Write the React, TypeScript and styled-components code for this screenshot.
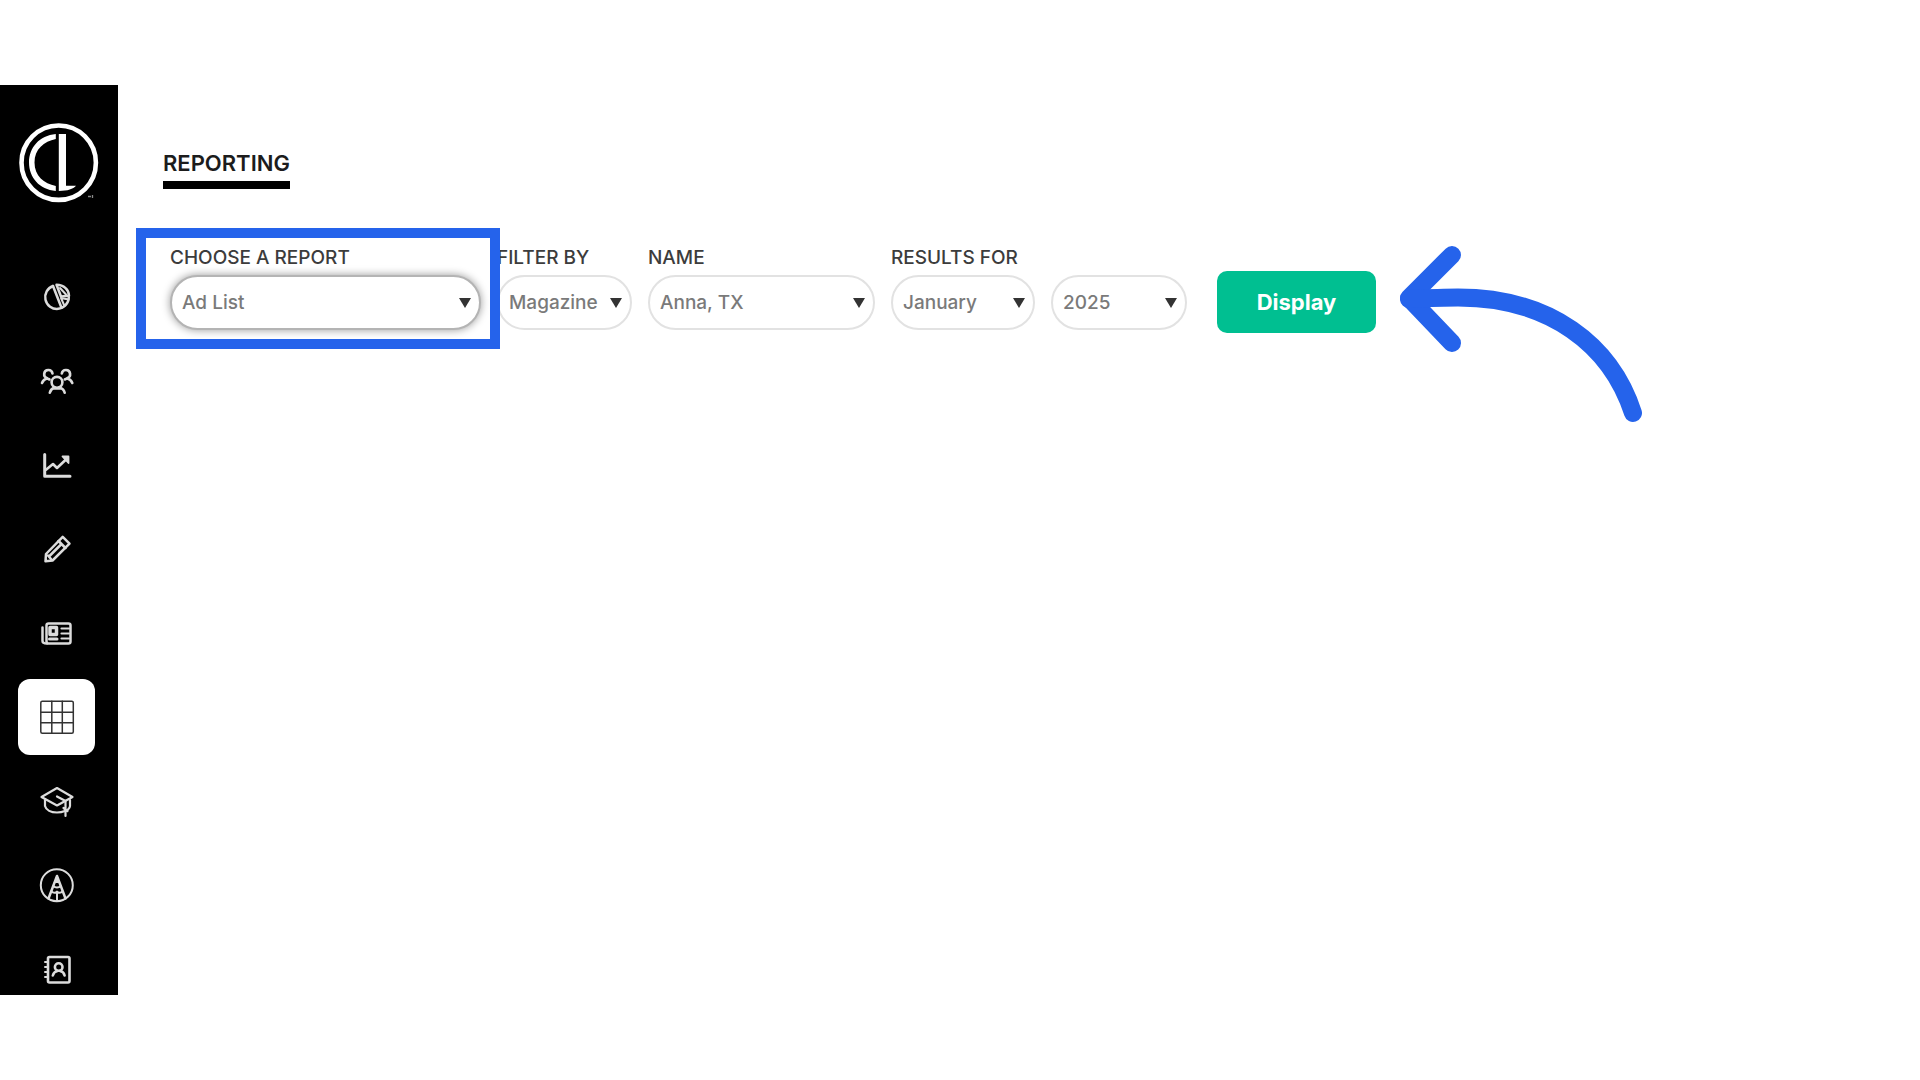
import React from "react";
import styled, { createGlobalStyle } from "styled-components";

const GlobalStyle = createGlobalStyle`
  *, *::before, *::after { box-sizing: border-box; }
  body {
    margin: 0;
    background: #fff;
    font-family: Inter, "Liberation Sans", sans-serif;
  }
`;

const accent = "#2563eb";

const Page = styled.div`
  display: flex;
  height: 100vh;
  padding: 85px 0;
  overflow: hidden;
`;

const Sidebar = styled.aside`
  flex: none;
  display: flex;
  flex-direction: column;
  width: 118px;
  padding: 37px 18px 0;
  overflow: hidden;
  background: #000;
`;

const HomeLink = styled.a`
  display: block;
  flex: none;
  height: 82px;
  margin-bottom: 55px;
`;

const Nav = styled.nav`
  display: flex;
  flex-direction: column;
  gap: 8px;
`;

const NavLink = styled.a<{ $active?: boolean }>`
  flex: none;
  display: grid;
  place-items: center;
  width: 77px;
  height: 76px;
  border-radius: 12px;
  color: ${(p) => (p.$active ? "#333" : "#dcdcdc")};
  background: ${(p) => (p.$active ? "#fff" : "transparent")};
`;

const Main = styled.main`
  flex: 1;
  min-width: 0;
  padding: 64px 45px 0;
`;

const Title = styled.h1`
  width: fit-content;
  margin: 0 0 58px;
  border-bottom: 8px solid #000;
  padding-bottom: 3px;
  font-size: 22px;
  line-height: 29px;
  font-weight: 600;
  color: #1c1c1c;
`;

const Filters = styled.form`
  display: flex;
  align-items: flex-end;
  gap: 16px;
  padding-left: 7px;
`;

const Field = styled.div<{ $width: number }>`
  position: relative;
  flex: none;
  display: flex;
  flex-direction: column;
  width: ${(p) => p.$width}px;
`;

const Highlight = styled.span`
  position: absolute;
  inset: -19px -19px -19px -34px;
  z-index: 2;
  border: 10px solid ${accent};
  pointer-events: none;
`;

const Label = styled.label`
  height: 28px;
  font-size: 19px;
  line-height: 22px;
  font-weight: 500;
  white-space: nowrap;
  color: #3c3c3c;
`;

const SelectBox = styled.div`
  position: relative;
  &::after {
    content: "";
    position: absolute;
    right: 10px;
    top: 23px;
    border: solid transparent;
    border-width: 10px 6px 0;
    border-top-color: #333;
    pointer-events: none;
  }
`;

const Select = styled.select<{ $focused?: boolean }>`
  display: block;
  appearance: none;
  width: 100%;
  height: 55px;
  padding: 0 24px 0 10px;
  border: 2px solid ${(p) => (p.$focused ? "#b4b4b4" : "#e2e2e2")};
  border-radius: 28px;
  background: #fff;
  box-shadow: ${(p) => (p.$focused ? "0 0 8px rgba(0, 0, 0, 0.4)" : "none")};
  font: 500 19px Inter, "Liberation Sans", sans-serif;
  color: #7a7a7a;
  outline: none;
`;

const Action = styled.div`
  position: relative;
  margin: 0 0 -3px 14px;
`;

const DisplayButton = styled.button`
  display: block;
  width: 159px;
  height: 62px;
  border: 0;
  border-radius: 10px;
  background: #00bf91;
  color: #fff;
  font: 700 22px Inter, "Liberation Sans", sans-serif;
`;

const Pointer = styled.svg`
  position: absolute;
  left: 100%;
  top: -26px;
  margin-left: 22px;
  pointer-events: none;
`;

function Logo() {
  return (
    <svg width="82" height="82" viewBox="0 0 82 82" role="img" aria-label="CL">
      <circle cx="40.7" cy="40.7" r="37.2" fill="none" stroke="#fff" strokeWidth="4.6" />
      <path
        d="M37.800 12C21.500 13.500 11 25.500 11 40.500S21.500 67.500 37.800 69V64C26 61.500 16.500 54 16.500 40.500S26 19.500 37.800 17Z"
        fill="#fff"
      />
      <path d="M40.800 12H48V63.800H58C55 67 50 69 40.800 69Z" fill="#fff" />
      <path d="M70 74.500h3M74.500 73v3" stroke="#888" strokeWidth="1.300" fill="none" />
    </svg>
  );
}

function Icon({ children, stroke = 2.6 }: { children: React.ReactNode; stroke?: number }) {
  return (
    <svg
      width="36"
      height="36"
      viewBox="0 0 36 36"
      fill="none"
      stroke="currentColor"
      strokeWidth={stroke}
      strokeLinecap="round"
      strokeLinejoin="round"
      aria-hidden="true"
    >
      {children}
    </svg>
  );
}

const items = [
  {
    name: "Overview",
    icon: (
      <Icon stroke={2.5}>
        <path d="M14 7A11.800 11.800 0 1 0 29.800 18.500" />
        <path d="M14 7L22.500 28.800" />
        <path d="M17.500 5.800L22 17.500L30 16.800C30 11 25 5.800 17.500 5.800Z" />
        <path d="M21 9L27 15.500M22 19L29.500 20.500M22 19L25.500 27" strokeWidth="2" />
      </Icon>
    ),
  },
  {
    name: "Clients",
    icon: (
      <Icon>
        <g transform="translate(0 1)">
          <circle cx="18" cy="18.300" r="5.400" />
          <path d="M10.800 28.800C11.500 26 13.500 24.200 15.500 23.500M25.700 28.800C25 26 22.800 24.200 20.500 23.500M14 24.500H22" />
          <path d="M13.500 9.500A4.200 4.200 0 1 0 8.300 14.300M8.300 14.300C6 15 4 16.500 3 19M8.300 14.300L10.500 15.500" />
          <path d="M22.800 9.500A4.200 4.200 0 1 1 28 14.300M28 14.300C30.300 15 32.300 16.500 33.300 19M28 14.300L25.800 15.500" />
        </g>
      </Icon>
    ),
  },
  {
    name: "Performance",
    icon: (
      <Icon>
        <g transform="translate(0 1)">
          <path d="M5.700 6.500V28.300H31" strokeWidth="3" />
          <path d="M7 21.700L14 16L18 20L27 11.500" />
          <path d="M23.500 8.500H29.500V15Z" fill="currentColor" strokeWidth="1.800" />
        </g>
      </Icon>
    ),
  },
  {
    name: "Edit",
    icon: (
      <Icon stroke={2.5}>
        <path d="M23.700 5.800L30.500 12.700L13.500 29.500L6.500 30.300L7 23Z" />
        <path d="M19.500 10L26.500 17M22 13.500L11 24.500M9 24.500L12 28" />
      </Icon>
    ),
  },
  {
    name: "Magazines",
    icon: (
      <Icon stroke={2.5}>
        <rect x="7.500" y="8.500" width="24" height="20" rx="2" />
        <path d="M3.500 12.500V26C3.500 28 5 28.500 8 28.500" />
        <path d="M22.500 13.500H30M22.500 18.500H30M22.500 23.500H30" strokeWidth="2.200" />
        <rect x="11" y="12.500" width="6.500" height="7" strokeWidth="3.500" />
        <path d="M10.500 24H18" strokeWidth="3" />
      </Icon>
    ),
  },
  {
    name: "Reporting",
    active: true,
    icon: (
      <Icon stroke={1.5}>
        <rect x="1.800" y="2.200" width="32.500" height="32" rx="1.500" />
        <path d="M12.800 2.200V34.200M23.300 2.200V34.200M2 13.200H34.300M2 23.700H34.300" />
      </Icon>
    ),
  },
  {
    name: "Training",
    icon: (
      <Icon stroke={2.2}>
        <g transform="translate(0 1)">
          <path d="M2.500 13L18 4L33.500 13L18 21.500Z" />
          <path d="M6 16V22C7 26 12 28.500 18 28.500C21 28.500 23.500 28 26 27M31 16V22C31 23.500 30 24.500 29 25.500" />
          <path d="M18 12.500L26.500 17V32M24.500 24L28.500 27" />
        </g>
      </Icon>
    ),
  },
  {
    name: "Design",
    icon: (
      <Icon stroke={2}>
        <circle cx="17.800" cy="18.200" r="16" />
        <path d="M9.500 31.500L18 9L26.500 31.500" strokeWidth="2.500" />
        <path d="M14.500 19C16 21 20 21 21.500 19M12.500 24.500C14 26 17 26 18 24.500C19 26 22 26 23.500 24.500M18 25V33.500" />
        <path d="M16.500 15L18 10L19.500 15Z" fill="currentColor" />
      </Icon>
    ),
  },
  {
    name: "Contacts",
    icon: (
      <Icon stroke={2.6}>
        <rect x="9" y="6" width="21.500" height="25.500" rx="1.500" />
        <path d="M6 11H9M6 16H9M6 21H9M6 26H9" strokeWidth="2" />
        <circle cx="19.700" cy="16" r="3.800" />
        <path d="M13.800 24.500C14.500 22 16.500 20.300 18.500 20M25.600 24.500C25 22 23 20.300 21 20" />
      </Icon>
    ),
  },
];

interface PickerProps {
  id: string;
  label: string;
  width: number;
  options: string[];
  hideLabel?: boolean;
  focused?: boolean;
}

function Picker({ id, label, width, options, hideLabel, focused }: PickerProps) {
  return (
    <Field $width={width}>
      {!hideLabel && <Label htmlFor={id}>{label}</Label>}
      <SelectBox>
        <Select id={id} $focused={focused} aria-label={hideLabel ? label : undefined}>
          {options.map((o) => (
            <option key={o}>{o}</option>
          ))}
        </Select>
      </SelectBox>
      {focused && <Highlight />}
    </Field>
  );
}

export default function App() {
  return (
    <>
      <GlobalStyle />
      <Page>
        <Sidebar>
          <HomeLink href="#home">
            <Logo />
          </HomeLink>
          <Nav>
            {items.map((item) => (
              <NavLink
                key={item.name}
                href={"#" + item.name.toLowerCase()}
                aria-label={item.name}
                $active={item.active}
              >
                {item.icon}
              </NavLink>
            ))}
          </Nav>
        </Sidebar>
        <Main>
          <Title>REPORTING</Title>
          <Filters onSubmit={(e) => e.preventDefault()}>
            <Picker id="report" label="CHOOSE A REPORT" width={311} options={["Ad List"]} focused />
            <Picker id="filter" label="FILTER BY" width={135} options={["Magazine"]} />
            <Picker id="name" label="NAME" width={227} options={["Anna, TX"]} />
            <Picker id="month" label="RESULTS FOR" width={144} options={["January"]} />
            <Picker id="year" label="Year" width={136} options={["2025"]} hideLabel />
            <Action>
              <DisplayButton type="submit">Display</DisplayButton>
              <Pointer
                width="246"
                height="180"
                viewBox="0 0 246 180"
                fill="none"
                stroke={accent}
                strokeWidth="18"
                strokeLinecap="round"
                strokeLinejoin="round"
                aria-hidden="true"
              >
                <path d="M54 10L11 53L54 98" />
                <path d="M11 54C33 53 47 52.500 60 52.500C152 52.500 213 100 235 168" />
              </Pointer>
            </Action>
          </Filters>
        </Main>
      </Page>
    </>
  );
}
